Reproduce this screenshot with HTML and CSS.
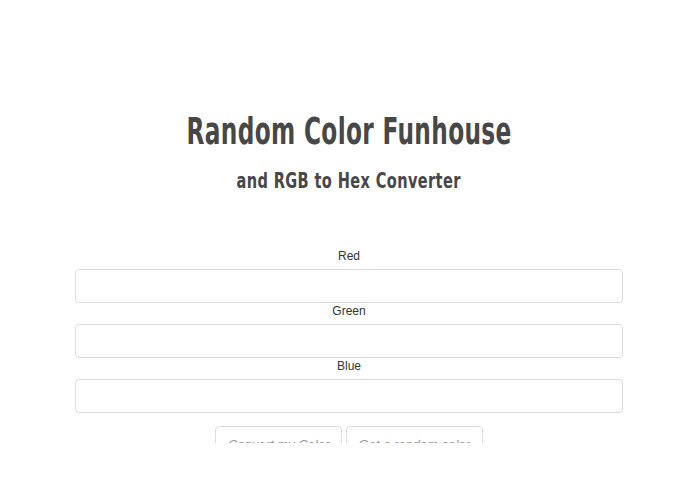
FILE: index.html
```html
<!DOCTYPE html>
<html lang="en">

<head>
    <meta charset="UTF-8">
    <meta name="viewport" content="width=device-width, initial-scale=1.0">
    <title>Random Color Funhouse</title>
    <link rel="stylesheet" href="styles.css">
</head>

<body>
    <div class="page">
        <header class="page-header">
            <h1>Random Color Funhouse</h1>
            <h2>and RGB to Hex Converter</h2>
        </header>

        <form class="color-form">
            <div class="form-group">
                <label for="red">Red</label>
                <input type="text" id="red" class="form-control">
            </div>
            <div class="form-group">
                <label for="green">Green</label>
                <input type="text" id="green" class="form-control">
            </div>
            <div class="form-group">
                <label for="blue">Blue</label>
                <input type="text" id="blue" class="form-control">
            </div>

            <div class="button-row">
                <button type="button" class="btn">Convert my Color</button>
                <button type="button" class="btn">Get a random color</button>
            </div>
        </form>
    </div>
</body>

</html>
```

FILE: styles.css
```css
* {
    margin: 0;
    padding: 0;
    box-sizing: border-box;
}

body {
    background-color: #fff;
    font-family: "Liberation Sans", Arial, sans-serif;
    font-size: 12px;
    color: #333;
}

.page {
    padding: 0 72px 0 75px;
}

.page-header {
    display: flex;
    flex-direction: column;
    align-items: center;
    padding-top: 108px;
    color: #474747;
    font-family: "DejaVu Sans Condensed", sans-serif;
    font-weight: bold;
}

/* squeeze the condensed face down to a poster-style narrow heading */
.page-header h1 {
    font-size: 38px;
    line-height: 46px;
    letter-spacing: 0.5px;
    transform: scaleX(0.68);
    white-space: nowrap;
}

.page-header h2 {
    font-size: 21px;
    line-height: 30px;
    margin-top: 12px;
    letter-spacing: 0.5px;
    transform: scaleX(0.77);
    white-space: nowrap;
}

.color-form {
    margin-top: 52px;
}

.form-group {
    display: flex;
    flex-direction: column;
    align-items: center;
}

.form-group label {
    line-height: 16px;
    margin-bottom: 5px;
}

.form-control {
    width: 100%;
    height: 34px;
    border: 1px solid #ddd;
    border-radius: 4px;
    background-color: #fff;
}

.button-row {
    margin-top: 13px;
    height: 17px;
    overflow: hidden;
    text-align: center;
}

.btn {
    height: 34px;
    padding: 8px 12px 6px;
    font-family: "Liberation Sans", Arial, sans-serif;
    font-size: 13px;
    font-style: italic;
    color: #999;
    background-color: #fff;
    border: 1px solid #ddd;
    border-radius: 4px;
}
```
